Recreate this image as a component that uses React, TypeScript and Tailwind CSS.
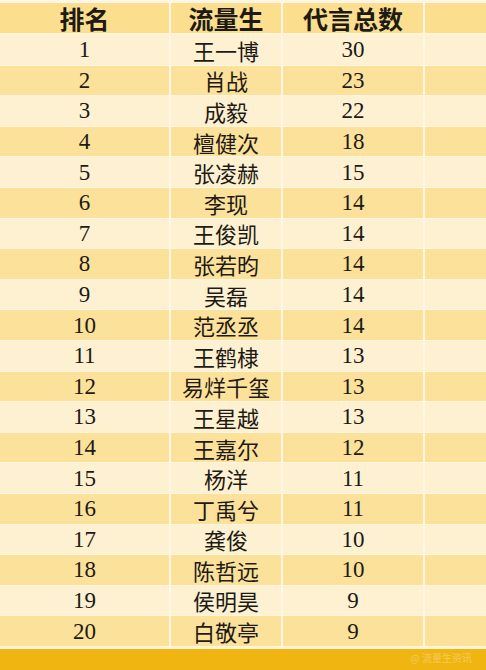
import React from "react";

const rows: [number, string, number][] = [
  [1, "王一博", 30],
  [2, "肖战", 23],
  [3, "成毅", 22],
  [4, "檀健次", 18],
  [5, "张凌赫", 15],
  [6, "李现", 14],
  [7, "王俊凯", 14],
  [8, "张若昀", 14],
  [9, "吴磊", 14],
  [10, "范丞丞", 14],
  [11, "王鹤棣", 13],
  [12, "易烊千玺", 13],
  [13, "王星越", 13],
  [14, "王嘉尔", 12],
  [15, "杨洋", 11],
  [16, "丁禹兮", 11],
  [17, "龚俊", 10],
  [18, "陈哲远", 10],
  [19, "侯明昊", 9],
  [20, "白敬亭", 9],
];

const cell = "flex items-center justify-center border-r-2 border-[#fff7e4]";

export default function App() {
  return (
    <div className="w-[486px] h-[670px] flex flex-col bg-[#fdf3d9] text-[#1e1a14] overflow-hidden">
      <div className="h-[3px] bg-[#fdf6e4]" />

      {/* header */}
      <div
        className="grid grid-cols-[171px_112px_142px_61px] h-[32px] bg-[#fcdf8e] border-b-2 border-[#fff5dc] text-[25px] font-bold leading-none"
        style={{ fontFamily: '"Noto Sans CJK SC", sans-serif' }}
      >
        <div className={cell}>排名</div>
        <div className={cell}>流量生</div>
        <div className={cell}>代言总数</div>
        <div />
      </div>

      {/* body */}
      <div className="flex flex-col">
        {rows.map(([rank, name, count], i) => (
          <div
            key={rank}
            className={
              "grid grid-cols-[171px_112px_142px_61px] h-[30.6px] border-b border-[#fff6e2] leading-none " +
              (i % 2 === 0 ? "bg-[#fdf1d2]" : "bg-[#fce19a]")
            }
          >
            <div
              className={cell + " text-[23px]"}
              style={{ fontFamily: '"Liberation Serif", serif' }}
            >
              {rank}
            </div>
            <div
              className={cell + " text-[22px]"}
              style={{ fontFamily: '"Noto Sans CJK SC", sans-serif' }}
            >
              {name}
            </div>
            <div
              className={cell + " text-[23px]"}
              style={{ fontFamily: '"Liberation Serif", serif' }}
            >
              {count}
            </div>
            <div />
          </div>
        ))}
      </div>

      <div className="h-[2px] bg-[#fff4d8]" />
      <div className="flex-1 bg-[#f1b512] flex items-start justify-end pr-[14px] pt-[1px]">
        <span className="text-[10px] text-white/30" style={{ fontFamily: '"Noto Sans CJK SC", sans-serif' }}>
          @ 流量生资讯
        </span>
      </div>
    </div>
  );
}
